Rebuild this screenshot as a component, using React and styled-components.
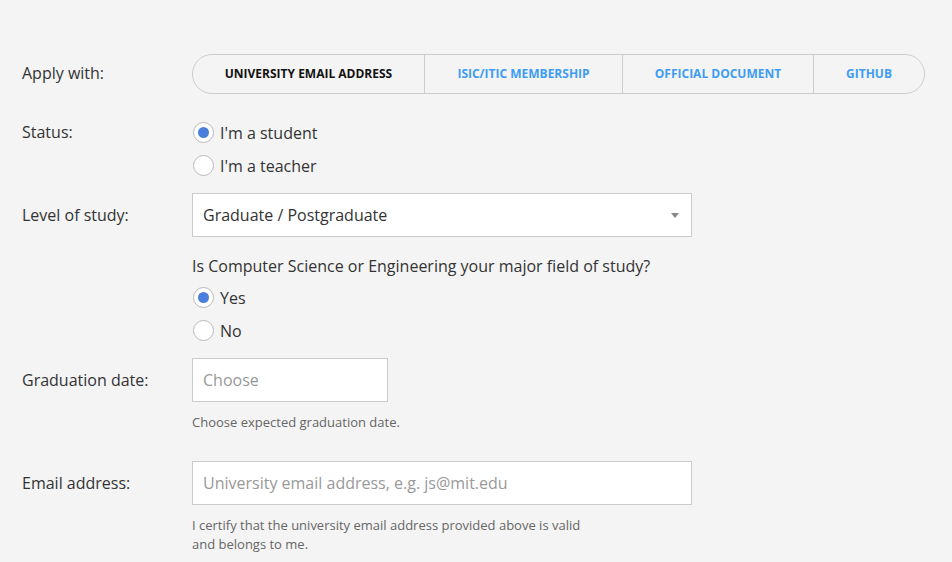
import React from 'react'
import styled, { createGlobalStyle } from 'styled-components'

const GlobalStyle = createGlobalStyle`
    html, body {
        margin: 0;
        padding: 0;
        background: #f4f4f4;
        font-family: "Open Sans", "Liberation Sans", sans-serif;
        color: #333;
    }
`
const Page = styled.div`
    padding: 54px 0 0 22px;
    width: 952px;
    box-sizing: border-box;
`
const Row = styled.div`
    display: grid;
    grid-template-columns: 170px 1fr;
    align-items: ${({top}) => top ? `start` : `center`};
    margin-top: ${({mt}) => mt || `0`};
`
const Label = styled.div`
    font-size: 16px;
    line-height: ${({lh}) => lh || `24px`};
    color: #333;
    padding-bottom: ${({pb}) => pb || `0`};
`
const Field = styled.div`
    display: flex;
    flex-direction: column;
`
const Tabs = styled.div`
    display: flex;
    width: 733px;
    height: 40px;
    box-sizing: border-box;
    border: 1px solid #cdcdcd;
    border-radius: 20px;
`
const Tab = styled.div`
    display: flex;
    align-items: center;
    justify-content: center;
    flex: 0 0 ${({w}) => w}px;
    padding-bottom: 2px;
    font-size: 12px;
    font-weight: 700;
    color: ${({active}) => active ? `#111` : `#3d9cf3`};
    border-left: ${({first}) => first ? `none` : `1px solid #cdcdcd`};
    box-sizing: border-box;
    cursor: pointer;
`
const RadioRow = styled.label`
    display: flex;
    align-items: center;
    height: 33px;
    font-size: 16px;
    color: #333;
    cursor: pointer;
`
const Circle = styled.span`
    width: 21px;
    height: 21px;
    box-sizing: border-box;
    margin-left: 1px;
    margin-right: 6px;
    border: 1px solid #b9b9b9;
    border-radius: 50%;
    background: #fff;
    display: flex;
    align-items: center;
    justify-content: center;
    &::after {
        content: '';
        display: ${({checked}) => checked ? `block` : `none`};
        width: 11px;
        height: 11px;
        border-radius: 50%;
        background: #4a80dc;
    }
`
const Box = styled.div`
    width: ${({w}) => w}px;
    height: 44px;
    box-sizing: border-box;
    border: 1px solid #cbcbcb;
    background: #fff;
    display: flex;
    align-items: center;
    justify-content: space-between;
    padding: 0 10px;
    font-size: 16px;
    color: ${({placeholder}) => placeholder ? `#999` : `#333`};
`
const Arrow = styled.span`
    width: 0;
    height: 0;
    border-left: 4px solid transparent;
    border-right: 4px solid transparent;
    border-top: 5px solid #888;
    margin-right: 2px;
`
const Question = styled.div`
    font-size: 16px;
    line-height: 24px;
    color: #333;
    margin-bottom: 3px;
`
const Hint = styled.div`
    font-size: 13px;
    line-height: 19px;
    color: #666;
    margin-top: 11px;
    max-width: ${({mw}) => mw || `none`};
`

const Radio = ({checked, children}) => (
    <RadioRow>
        <Circle checked={checked} />
        {children}
    </RadioRow>
)

const tabs = [
    { text: 'UNIVERSITY EMAIL ADDRESS', w: 231 },
    { text: 'ISIC/ITIC MEMBERSHIP', w: 198 },
    { text: 'OFFICIAL DOCUMENT', w: 191 },
    { text: 'GITHUB', w: 111 },
]

const App = () => {
    return (
        <>
        <GlobalStyle />
        <Page>
            <Row>
                <Label pb="2px">Apply with:</Label>
                <Tabs>
                    {tabs.map((t, i) => (
                        <Tab key={i} w={t.w} first={i === 0} active={i === 0}>{t.text}</Tab>
                    ))}
                </Tabs>
            </Row>
            <Row top mt="22px">
                <Label lh="33px">Status:</Label>
                <Field>
                    <Radio checked>I'm a student</Radio>
                    <Radio>I'm a teacher</Radio>
                </Field>
            </Row>
            <Row mt="11px">
                <Label>Level of study:</Label>
                <Box w={500}>
                    Graduate / Postgraduate
                    <Arrow />
                </Box>
            </Row>
            <Row top mt="17px">
                <div />
                <Field>
                    <Question>Is Computer Science or Engineering your major field of study?</Question>
                    <Radio checked>Yes</Radio>
                    <Radio>No</Radio>
                </Field>
            </Row>
            <Row top mt="11px">
                <Label lh="44px">Graduation date:</Label>
                <Field>
                    <Box w={196} placeholder>Choose</Box>
                    <Hint>Choose expected graduation date.</Hint>
                </Field>
            </Row>
            <Row top mt="29px">
                <Label lh="44px">Email address:</Label>
                <Field>
                    <Box w={500} placeholder>University email address, e.g. js@mit.edu</Box>
                    <Hint mw="400px">I certify that the university email address provided above is valid and belongs to me.</Hint>
                </Field>
            </Row>
        </Page>
        </>
    )
}

export default App
